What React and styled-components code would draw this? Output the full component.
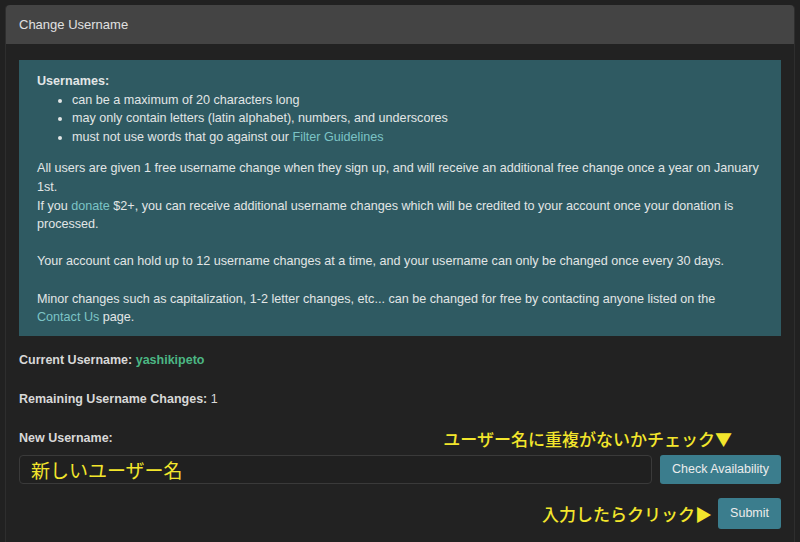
import React from 'react';
import styled, { createGlobalStyle } from 'styled-components';

const GlobalStyle = createGlobalStyle`
  body {
    margin: 0;
    background: #212121;
    font-family: "Liberation Sans", Arial, sans-serif;
    color: #dcdcdc;
    overflow: hidden;
  }
`;

const Page = styled.div`
  padding: 5px;
  height: 580px;
`;

const Card = styled.section`
  border: 1px solid #2e2e2e;
  border-top: none;
  border-radius: 4px;
  background: #222222;
  height: 100%;
`;

const CardHeader = styled.header`
  display: flex;
  align-items: center;
  height: 39px;
  padding: 0 13px;
  background: #444444;
  border-radius: 4px 4px 0 0;
  font-size: 13px;
  color: #e0e0e0;
`;

const CardBody = styled.div`
  padding: 16px 13px 0;
`;

const Alert = styled.div`
  background: #2f5a62;
  padding: 12px 18px 9px;
  font-size: 12.6px;
  line-height: 18.6px;
  color: #e2e6e6;
`;

const AlertTitle = styled.strong`
  display: block;
`;

const RuleList = styled.ul`
  margin: 0;
  padding-left: 35px;
`;

const AlertText = styled.p`
  margin: 13px 0 0;
`;

const TextLink = styled.a`
  color: #7cc4c6;
  text-decoration: none;
  white-space: nowrap;
`;

const InfoLine = styled.p`
  margin: 15px 0 20px;
  font-size: 12.5px;
  line-height: 19px;
  font-weight: bold;
  color: #d8d8d8;
`;

const Value = styled.span`
  color: ${(p) => (p.accent ? '#4cb784' : '#d8d8d8')};
  font-weight: ${(p) => (p.accent ? 'bold' : 'normal')};
`;

const LabelRow = styled.div`
  display: flex;
  align-items: center;
  justify-content: space-between;
  height: 19px;
  margin-top: 20px;
`;

const Label = styled.label`
  font-size: 12.5px;
  font-weight: bold;
  color: #d8d8d8;
`;

const Note = styled.span`
  font-family: "Noto Sans CJK JP", sans-serif;
  font-size: 17px;
  font-weight: 500;
  color: #f3e62c;
  white-space: nowrap;
  margin-right: ${(p) => p.offset || 0}px;
`;

const InputRow = styled.div`
  display: flex;
  gap: 8px;
  margin-top: 7px;
`;

const TextInput = styled.input`
  flex: 1;
  height: 29px;
  box-sizing: border-box;
  background: #202020;
  border: 1px solid #3a3a3a;
  border-radius: 4px;
  padding: 0 11px;
  font-family: "Noto Sans CJK JP", sans-serif;
  font-size: 19px;
  color: #f3e62c;

  &::placeholder {
    color: #f3e62c;
    opacity: 1;
  }
`;

const Button = styled.button`
  height: ${(p) => (p.tall ? 31 : 29)}px;
  padding: 0 12px;
  background: #3b7d8d;
  border: none;
  border-radius: 3px;
  font-family: "Liberation Sans", Arial, sans-serif;
  font-size: 12.5px;
  color: #ececec;
`;

const SubmitRow = styled.div`
  display: flex;
  align-items: center;
  justify-content: flex-end;
  gap: 6px;
  margin-top: 14px;
`;

export default function App() {
  return (
    <>
      <GlobalStyle />
      <Page>
        <Card>
          <CardHeader>Change Username</CardHeader>
          <CardBody>
            <Alert>
              <AlertTitle>Usernames:</AlertTitle>
              <RuleList>
                <li>can be a maximum of 20 characters long</li>
                <li>may only contain letters (latin alphabet), numbers, and underscores</li>
                <li>
                  must not use words that go against our <TextLink href="#">Filter Guidelines</TextLink>
                </li>
              </RuleList>
              <AlertText>
                All users are given 1 free username change when they sign up, and will receive an additional free
                change once a year on January 1st.
                <br />
                If you <TextLink href="#">donate</TextLink> $2+, you can receive additional username changes which
                will be credited to your account once your donation is processed.
                <br />
                <br />
                Your account can hold up to 12 username changes at a time, and your username can only be changed once
                every 30 days.
                <br />
                <br />
                Minor changes such as capitalization, 1-2 letter changes, etc... can be changed for free by contacting
                anyone listed on the <TextLink href="#">Contact Us</TextLink> page.
              </AlertText>
            </Alert>

            <InfoLine>
              Current Username: <Value accent>yashikipeto</Value>
            </InfoLine>
            <InfoLine>
              Remaining Username Changes: <Value>1</Value>
            </InfoLine>

            <LabelRow>
              <Label htmlFor="new-username">New Username:</Label>
              <Note offset={49}>ユーザー名に重複がないかチェック▼</Note>
            </LabelRow>
            <InputRow>
              <TextInput id="new-username" placeholder="新しいユーザー名" />
              <Button>Check Availability</Button>
            </InputRow>
            <SubmitRow>
              <Note>入力したらクリック▶</Note>
              <Button tall>Submit</Button>
            </SubmitRow>
          </CardBody>
        </Card>
      </Page>
    </>
  );
}
